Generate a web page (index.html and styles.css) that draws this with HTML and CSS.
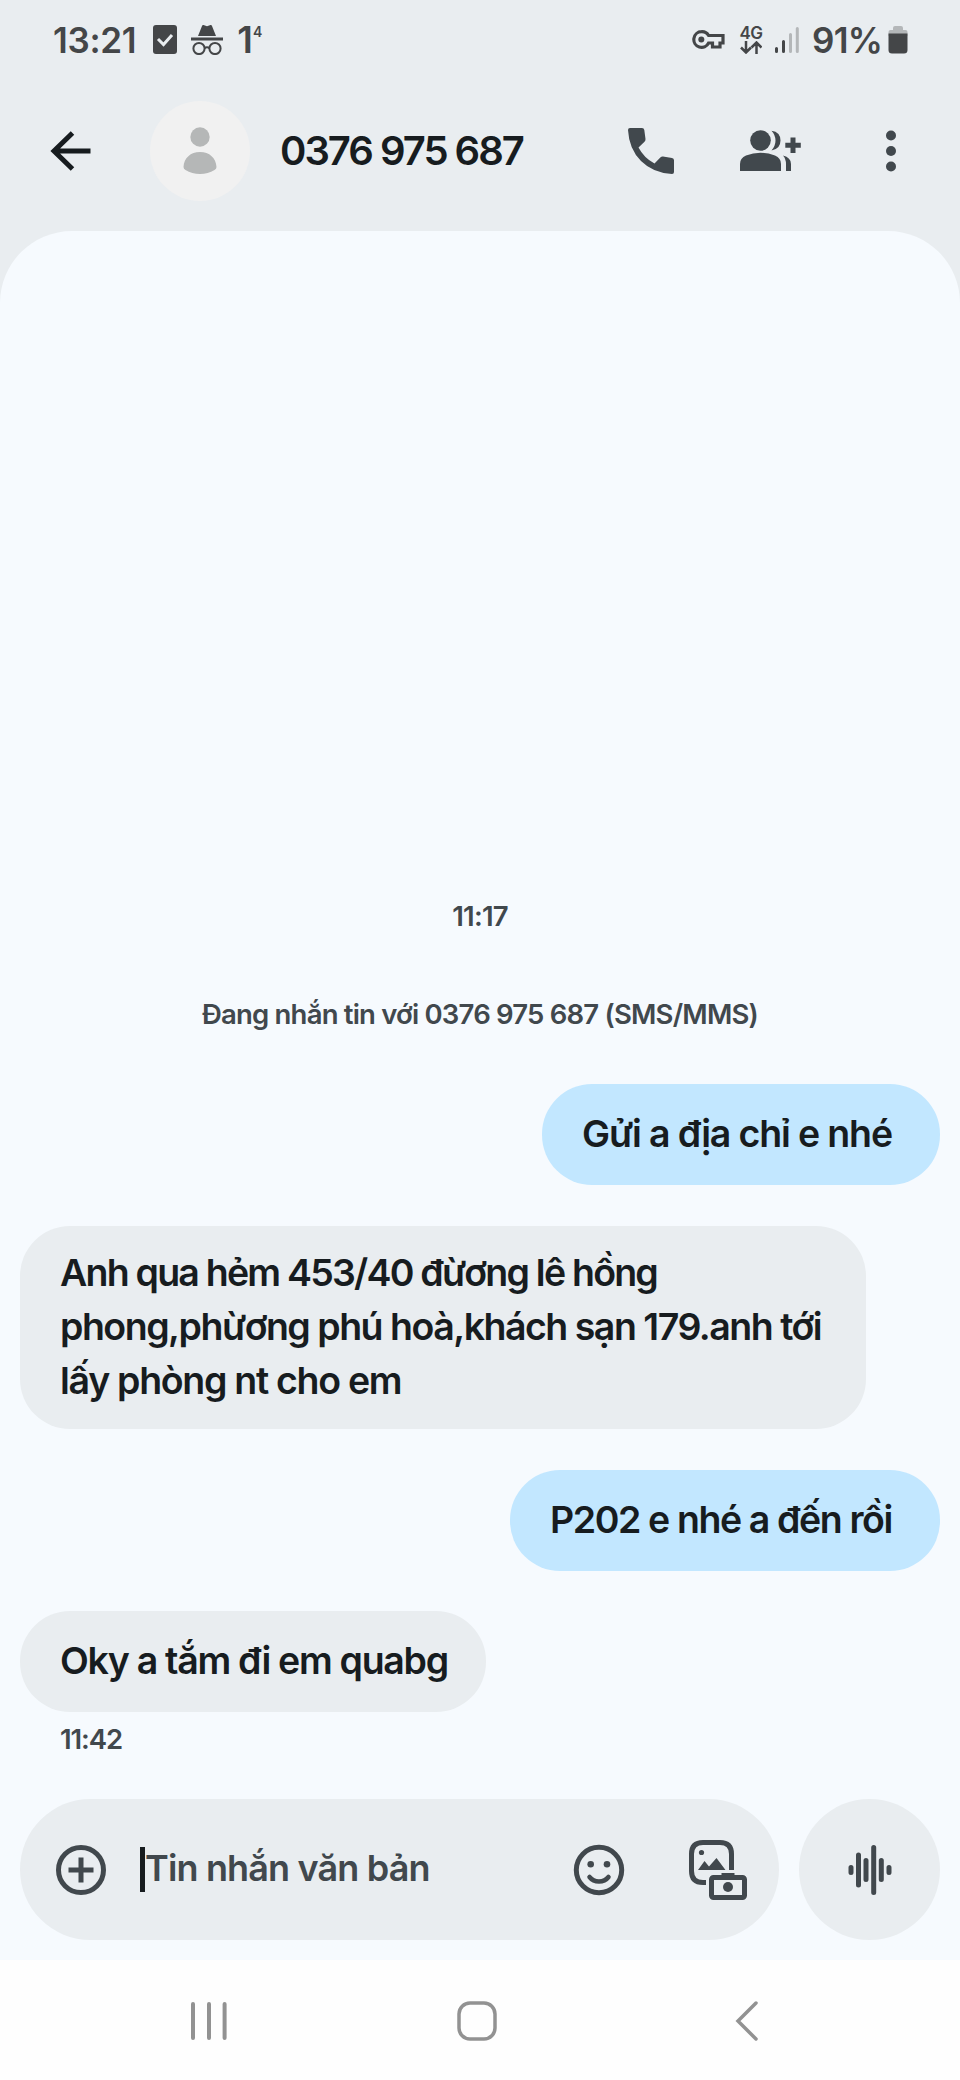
FILE: index.html
```html
<!DOCTYPE html>
<html lang="vi">
<head>
<meta charset="utf-8">
<title>0376 975 687</title>
<link rel="stylesheet" href="styles.css">
</head>
<body>
<div class="phone">
  <div class="status">
    <span class="clock">13:21</span>
    <svg class="st-check" width="24" height="30" viewBox="0 0 24 30"><rect x="0" y="0" width="24" height="29" rx="3" fill="#444648"/><path d="M5 14l5.500 5.500L19 10" fill="none" stroke="#e9edf0" stroke-width="3"/></svg>
    <svg class="st-incog" width="32" height="30" viewBox="0 0 32 30" fill="#444648"><path d="M7 11L11 1q.6-1.500 2.200-.8L16 1.300 18.800.2Q20.400-.5 21 1l4 10z"/><rect x="0" y="12.500" width="32" height="3"/><g fill="none" stroke="#444648" stroke-width="2"><circle cx="8" cy="23.500" r="5.600"/><circle cx="24" cy="23.500" r="5.600"/><path d="M13.500 23.200q2.500-2 5 0"/></g></svg>
    <span class="one">1<span class="four">4</span></span>
    <span class="spacer"></span>
    <svg class="st-key" width="33" height="20" viewBox="0 0 33 20"><path d="M9.500 1.700a7.800 7.800 0 1 0 7.100 11.300H20.500V17H28V13h3V5.500H16.600A7.800 7.800 0 0 0 9.500 1.700z" fill="none" stroke="#444648" stroke-width="3.200"/><circle cx="9.300" cy="9.500" r="3" fill="#444648"/></svg>
    <div class="net"><span class="fourg">4G</span><svg width="22" height="13" viewBox="0 0 22 13" fill="none" stroke="#444648" stroke-width="2.500"><path d="M6 0v11M1 6.500l5 5 5-5M16.500 13V2M11.500 6.500l5-5 5 5"/></svg></div>
    <svg class="st-signal" width="24" height="26" viewBox="0 0 24 26"><g stroke-width="3" stroke-linecap="round"><path d="M1.500 21.500v3M8.500 14.500v10" stroke="#444648"/><path d="M15.500 7.500v17M22.300 1.500v23" stroke="#b4b7b9"/></g></svg>
    <span class="pct">91%</span>
    <svg class="st-batt" width="20" height="28" viewBox="0 0 20 28"><path d="M5 2q0-2 2-2h6q2 0 2 2v2h2.500q2 0 2 2v4H.5V6q0-2 2-2H5z" fill="#b4b7b9"/><path d="M.5 7.500h19V24q0 3.500-3.500 3.500H4Q.5 27.500.5 24z" fill="#444648"/></svg>
  </div>
  <header class="appbar">
    <svg class="back" width="42" height="40" viewBox="0 0 42 40" fill="none" stroke="#171c1f" stroke-width="5"><path d="M40.500 20H4M22.500 2L4 20l18.500 18"/></svg>
    <div class="avatar"><svg width="34" height="48" viewBox="0 0 34 48" fill="#b5b7b7"><circle cx="17" cy="10" r="9.700"/><path d="M.5 40C1 31 7.500 25 17 25s16 6 16.500 15q0 2-2 3Q25 47 17 47T2.500 43q-2-1-2-3z"/></svg></div>
    <h1 class="title">0376 975 687</h1>
    <svg class="call" width="46" height="46" viewBox="0 0 46 46" fill="#41484d"><path d="M2 0h12q2 0 2.300 2L17.500 11q.2 1.500-1 2.700L10.500 19.500Q16 30 26.500 35.500l5.800-6q1.200-1.200 2.700-1L44 30q2 .4 2 2.300V44q0 2-2 2Q25 45 13 33T0 2Q0 0 2 0z"/></svg>
    <svg class="group" width="62" height="42" viewBox="0 0 62 42" fill="#41484d"><circle cx="20.500" cy="10.500" r="10.300"/><path d="M0 41V34Q0 28 6 25.500 13 22.800 20.500 22.800T35 25.500Q41 28 41 34v7zM31.500.7q9 1.300 9 9.800t-9 9.900Q35.500 16 35.500 10.500T31.500.7zM43 25.500q8 2 8 8.500v7H46V34q0-5-3-8.500zM50.500 7.500h5v5.300h5.300v5h-5.300V23h-5v-5.200H45.300v-5h5.200z"/></svg>
    <svg class="more" width="10" height="42" viewBox="0 0 10 42" fill="#41484d"><circle cx="5" cy="5.500" r="5"/><circle cx="5" cy="21" r="5"/><circle cx="5" cy="36.500" r="5"/></svg>
  </header>
  <main class="sheet">
    <div class="thread">
      <div class="date">11:17</div>
      <div class="notice">Đang nhắn tin với 0376 975 687 (SMS/MMS)</div>
      <div class="bubble out m1"><span>Gửi a địa chỉ e nhé</span></div>
      <div class="bubble in m2"><span class="l1">Anh qua hẻm 453/40 đừơng lê hồng</span><span class="l2">phong,phừơng phú hoà,khách sạn 179.anh tới</span><span class="l3">lấy phòng nt cho em</span></div>
      <div class="bubble out m3"><span>P202 e nhé a đến rồi</span></div>
      <div class="bubble in m4"><span>Oky a tắm đi em quabg</span></div>
      <div class="stamp">11:42</div>
    </div>
    <div class="composer">
      <div class="field">
        <svg class="plus" width="50" height="50" viewBox="0 0 50 50" fill="none" stroke="#41484d" stroke-width="5"><circle cx="25" cy="25" r="22.500"/><path d="M25 12.500v25M12.500 25h25"/></svg>
        <span class="caret"></span><span class="hint">Tin nhắn văn bản</span>
        <span class="spacer"></span>
        <svg class="smile" width="52" height="52" viewBox="0 0 52 52" fill="none" stroke="#41484d" stroke-width="5"><circle cx="26" cy="26" r="22.700"/><path d="M16.500 33q3.500 4.500 9.500 4.500t9.500-4.500" stroke-width="4.500" stroke-linecap="round"/><g fill="#41484d" stroke="none"><circle cx="17.700" cy="20.300" r="3.300"/><circle cx="34" cy="20.300" r="3.300"/></g></svg>
        <svg class="media" width="58" height="60" viewBox="0 0 58 60" fill="#41484d"><path d="M17 42.500h-3Q2.500 42.500 2.500 31V14Q2.500 2.500 14 2.500h17Q42.500 2.500 42.500 14v16" fill="none" stroke="#41484d" stroke-width="5"/><circle cx="12.500" cy="12.500" r="2.600"/><path d="M9 30l6.500-9 4.500 5.500 7.500-8.500 9 12z"/><path d="M32.500 36v-3h13v3"/><rect x="22.500" y="37.500" width="33" height="20" rx="2" fill="none" stroke="#41484d" stroke-width="5"/><circle cx="39" cy="47" r="5"/></svg>
      </div>
      <div class="voice"><svg width="44" height="52" viewBox="0 0 44 52" stroke="#41484d" stroke-width="5" stroke-linecap="round"><path d="M3 23.500v5M10.500 11v30M18 16.500v19M25.700 3.500v45M33.300 16.500v19M41 23.500v5"/></svg></div>
    </div>
  </main>
  <nav class="nav">
    <svg class="recents" width="36" height="38" viewBox="0 0 36 38" stroke="#929292" stroke-width="4" stroke-linecap="round"><path d="M2 2v34M18 2v34M33.600 2v34"/></svg>
    <svg class="home" width="40" height="40" viewBox="0 0 40 40" fill="none" stroke="#929292" stroke-width="3.500"><rect x="2" y="2" width="36" height="36" rx="11"/></svg>
    <svg class="prev" width="24" height="40" viewBox="0 0 24 40" fill="none" stroke="#929292" stroke-width="3.500" stroke-linecap="round"><path d="M21 2L3 20l18 18"/></svg>
  </nav>
</div>
</body>
</html>
```
FILE: styles.css
```css
* { box-sizing: border-box; }
body { margin: 0; font-family: Inter, "Noto Sans", sans-serif; }
svg { display: block; flex: none; }
.spacer { flex: 1; }
.phone { width: 960px; height: 2080px; display: flex; flex-direction: column; background: #e9edf0; overflow: hidden; }

.status { height: 80px; display: flex; align-items: center; padding: 0 52px 0 53px; color: #444648; font-weight: 600; }
.clock { font-size: 35px; line-height: 80px; letter-spacing: -0.3px; padding-bottom: 1px; }
.st-check { margin-left: 17px; }
.st-incog { margin-left: 14px; }
.one { font-size: 37px; display: flex; align-items: flex-start; margin-left: 14px; line-height: 40px; }
.four { font-size: 14px; line-height: 16px; margin-top: 4px; }
.net { display: flex; flex-direction: column; align-items: center; margin-left: 14px; width: 24px; }
.fourg { font-size: 17px; line-height: 15px; letter-spacing: -0.5px; }
.st-signal { margin-left: 12px; }
.pct { font-size: 35px; margin-left: 13px; padding-bottom: 1px; letter-spacing: -0.8px; }
.st-batt { margin: 0 0 0 6px; }

.appbar { height: 151px; padding: 0 64px 9px 50px; display: flex; align-items: center; }
.avatar { width: 100px; height: 100px; border-radius: 50%; background: #f1f1f1; display: flex; align-items: center; justify-content: center; margin-left: 58px; }
.title { margin: 0 0 0 30px; padding-bottom: 2px; font-size: 40px; font-weight: 600; color: #171c1f; width: 348px; white-space: nowrap; letter-spacing: -2px; }
.group { margin-left: 66px; }
.more { margin-left: auto; }

.sheet { height: 1729px; background: #f6fafe; border-radius: 72px 72px 0 0; padding: 0 20px 20px; display: flex; flex-direction: column; }
.thread { flex: 1; display: flex; flex-direction: column; justify-content: flex-end; }
.date, .notice, .stamp { font-size: 27.5px; line-height: 40px; font-weight: 600; color: #41484d; text-align: center; white-space: nowrap; }
.date { letter-spacing: -0.8px; }
.notice { margin-top: 58px; margin-bottom: 50px; letter-spacing: -0.8px; }
.bubble { font-size: 37.5px; line-height: 54px; font-weight: 600; color: #171c1f; padding: 23px 40px 24px; border-radius: 50px; display: flex; flex-direction: column; align-items: flex-start; white-space: nowrap; }
.out { align-self: flex-end; background: #c2e7ff; }
.in { align-self: flex-start; background: #e9edf0; }
.m1 { width: 398px; letter-spacing: -1.15px; }
.m2 { width: 846px; margin-top: 41px; height: 203px; padding-top: 20px; }
.l1 { letter-spacing: -1.78px; }
.l2 { letter-spacing: -1.5px; }
.l3 { letter-spacing: -1.3px; }
.m3 { width: 430px; margin-top: 41px; letter-spacing: -1.4px; }
.m4 { width: 466px; margin-top: 40px; letter-spacing: -1.3px; }
.stamp { text-align: left; padding-left: 40px; margin: 7px 0 40px; letter-spacing: -1.1px; }

.composer { display: flex; gap: 20px; height: 141px; }
.field { width: 759px; height: 141px; border-radius: 71px; background: #e9edf0; display: flex; align-items: center; padding: 0 32px 0 36px; }
.caret { width: 5px; height: 45px; background: #171c1f; margin-left: 34px; }
.hint { font-size: 36px; font-weight: 600; color: #41484d; padding-bottom: 4px; letter-spacing: -0.85px; white-space: nowrap; }
.media { margin-left: 64px; }
.voice { width: 141px; height: 141px; border-radius: 50%; background: #e9edf0; display: flex; align-items: center; justify-content: center; }

.nav { height: 120px; background: #fefefe; display: flex; align-items: center; padding: 2px 0 0 191px; }
.home { margin-left: 230px; }
.prev { margin-left: 238px; }
```
